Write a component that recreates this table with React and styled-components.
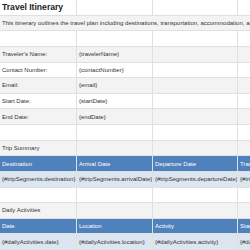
import React from "react";
import styled, { createGlobalStyle } from "styled-components";

const Global = createGlobalStyle`
  html, body { margin: 0; padding: 0; background: #ffffff; overflow: hidden; }
  body { font-family: "Liberation Sans", Arial, sans-serif; color: #333333; }
`;

const Sheet = styled.div`
  width: 360px;
  display: flex;
  flex-direction: column;
`;

const tones = {
  white: { bg: "#ffffff", fg: "#333333" },
  gray: { bg: "#f3f3f3", fg: "#333333" },
  header: { bg: "#4f81bd", fg: "#ffffff" },
  data: { bg: "#dce6f1", fg: "#333333" },
};

const Row = styled.div`
  display: grid;
  grid-template-columns: 77px 76px 85px 122px;
  height: 15.625px;
  box-sizing: border-box;
  border-bottom: 1px solid #e0e0e0;
  background: ${(p) => tones[p.$tone].bg};
  color: ${(p) => tones[p.$tone].fg};
`;

const Cell = styled.div`
  display: flex;
  align-items: center;
  padding: 0 2px;
  box-sizing: border-box;
  border-right: 1px solid #e0e0e0;
  font-size: 6px;
  white-space: nowrap;
  overflow: hidden;
  min-width: 0;
`;

const WideCell = styled(Cell)`
  grid-column: 1 / -1;
  border-right: none;
`;

const Title = styled(Cell)`
  font-size: 8.6px;
  font-weight: bold;
  color: #222222;
  overflow: visible;
`;

const rows = [
  { tone: "gray", wide: "This itinerary outlines the travel plan including destinations, transportation, accommodation, and daily activities." },
  { tone: "white", cells: ["", "", "", ""] },
  { tone: "gray", cells: ["Traveler's Name:", "{travelerName}", "", ""] },
  { tone: "white", cells: ["Contact Number:", "{contactNumber}", "", ""] },
  { tone: "gray", cells: ["Email:", "{email}", "", ""] },
  { tone: "white", cells: ["Start Date:", "{startDate}", "", ""] },
  { tone: "gray", cells: ["End Date:", "{endDate}", "", ""] },
  { tone: "white", cells: ["", "", "", ""] },
  { tone: "gray", cells: ["Trip Summary", "", "", ""] },
  { tone: "header", cells: ["Destination", "Arrival Date", "Departure Date", "Transportation"] },
  { tone: "data", cells: ["{#tripSegments.destination}", "{#tripSegments.arrivalDate}", "{#tripSegments.departureDate}", "{#tripSegments.transportation}"] },
  { tone: "white", cells: ["", "", "", ""] },
  { tone: "gray", cells: ["Daily Activities", "", "", ""] },
  { tone: "header", cells: ["Date", "Location", "Activity", "Start Time"] },
  { tone: "data", cells: ["{#dailyActivities.date}", "{#dailyActivities.location}", "{#dailyActivities.activity}", "{#dailyActivities.startTime}"] },
];

export default function App() {
  return (
    <>
      <Global />
      <Sheet>
        <Row $tone="white">
          <Title>Travel Itinerary</Title>
          <Cell />
          <Cell />
          <Cell />
        </Row>
        {rows.map((r, i) => (
          <Row key={i} $tone={r.tone}>
            {r.wide ? (
              <WideCell>{r.wide}</WideCell>
            ) : (
              r.cells.map((c, j) => <Cell key={j}>{c}</Cell>)
            )}
          </Row>
        ))}
      </Sheet>
    </>
  );
}
